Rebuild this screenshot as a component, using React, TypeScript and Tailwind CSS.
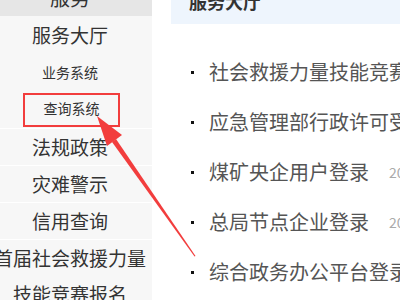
const menu = ["法规政策", "灾难警示", "信用查询"];

const news = [
  { title: "社会救援力量技能竞赛报名系统", date: "2021-05-10" },
  { title: "应急管理部行政许可受理系统", date: "2021-03-02" },
  { title: "煤矿央企用户登录", date: "2020-11-20" },
  { title: "总局节点企业登录", date: "2020-11-20" },
  { title: "综合政务办公平台登录", date: "2020-09-18" },
];

const cjk = { fontFamily: '"Noto Sans CJK SC", "Noto Sans", sans-serif' };

const Arrow = () => (
  <svg className="absolute inset-0 pointer-events-none" width="400" height="300" viewBox="0 0 400 300">
    {/* head */}
    <polygon points="97,116 107,146 122,135" fill="#f23d3d" />
    {/* shaft, tapering toward the tail */}
    <polygon points="112,142 116,139 195.5,256 194.5,256.5" fill="#f23d3d" />
  </svg>
);

export default function App() {
  return (
    <div className="relative w-[400px] h-[300px] overflow-hidden flex items-start bg-white" style={cjk}>
      {/* left menu */}
      <div className="w-[152px] h-[300px] shrink-0 bg-[#f7f7f7] text-[#333] overflow-hidden">
        <div className="h-[16px] overflow-hidden bg-[#e6e6e6] pr-[12px]">
          <div className="text-[20px] leading-[20px] -mt-[12px] text-center">服务</div>
        </div>
        <div className="pr-[12px] pb-[2px] border-b border-white">
          <div className="h-[38px] flex items-center justify-center text-[19px]">服务大厅</div>
          <div className="h-[36px] flex items-center justify-center text-[14px]">业务系统</div>
          <div className="h-[36px] flex items-center justify-center">
            <div className="w-[97px] h-[34px] mt-[4px] ml-[3px] border-2 border-[#f23d3d] flex items-center justify-center text-[14px] pb-[3px]">
              查询系统
            </div>
          </div>
        </div>
        {menu.map((m) => (
          <div key={m} className="h-[37px] pr-[12px] border-b border-white flex items-center justify-center text-[19px]">
            {m}
          </div>
        ))}
        <div className="pr-[12px] text-[19px] leading-[36px] text-center whitespace-nowrap -mx-[6px]">
          <div>首届社会救援力量</div>
          <div>技能竞赛报名</div>
        </div>
      </div>

      {/* right content */}
      <div className="flex-1 min-w-0">
        <div className="ml-[19px] h-[24px] overflow-hidden bg-[#eef5fd] px-[18px]">
          <div className="text-[18px] leading-[18px] -mt-[8px] font-bold text-[#333]">服务大厅</div>
        </div>
        <ul className="mt-[23px] pl-[39px]">
          {news.map((n) => (
            <li key={n.title} className="h-[50px] flex items-center whitespace-nowrap">
              <span className="w-[3px] h-[3px] bg-[#111] shrink-0 mt-[1px]" />
              <span className="ml-[15px] text-[20px] text-[#555]">{n.title}</span>
              <span className="ml-[20px] text-[14px] text-[#aaa]">{n.date}</span>
            </li>
          ))}
        </ul>
      </div>

      <Arrow />
    </div>
  );
}
